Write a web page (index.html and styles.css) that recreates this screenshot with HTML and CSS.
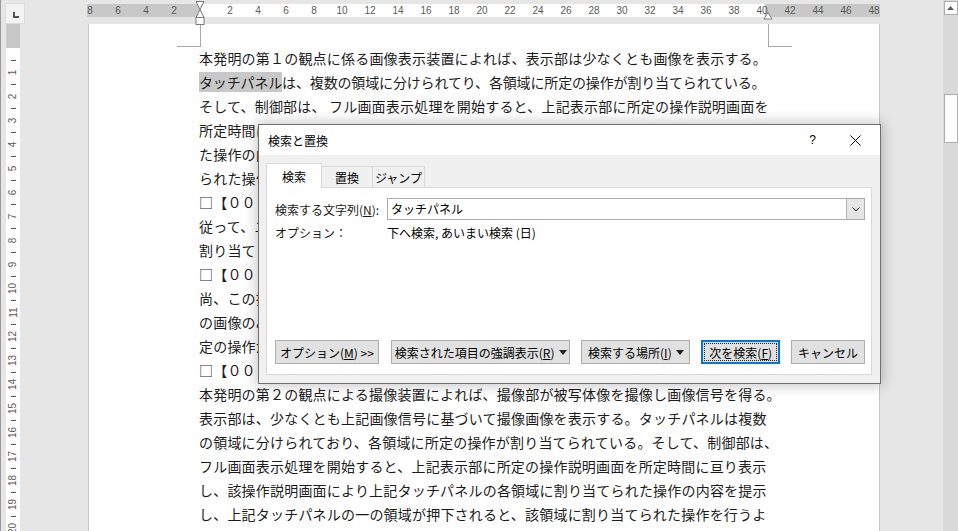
FILE: index.html
```html
<!DOCTYPE html>
<html lang="ja">
<head>
    <meta charset="UTF-8">
    <title>検索と置換</title>
    <link rel="stylesheet" href="styles.css">
</head>
<body>
<div class="app">
    <!-- Рабочая область документа -->
    <div class="workspace">
        <div class="top-bar">
            <div class="tab-selector"><span class="tab-l"></span></div>
            <div class="h-ruler">
                <div class="h-ruler-nums">
                    <span>8</span><span>6</span><span>4</span><span>2</span><span></span>
                    <span>2</span><span>4</span><span>6</span><span>8</span><span>10</span>
                    <span>12</span><span>14</span><span>16</span><span>18</span><span>20</span>
                    <span>22</span><span>24</span><span>26</span><span>28</span><span>30</span>
                    <span>32</span><span>34</span><span>36</span><span>38</span><span>40</span>
                    <span>42</span><span>44</span><span>46</span><span>48</span>
                </div>
                <svg class="indent-left" width="10" height="26" viewBox="0 0 10 26">
                    <polygon points="1,1.5 9,1.5 5,9.5" fill="#fff" stroke="#7a7a7a"/>
                    <polygon points="5,9.5 9,17.5 1,17.5" fill="#fff" stroke="#7a7a7a"/>
                    <rect x="1" y="17.5" width="8" height="7" fill="#fff" stroke="#7a7a7a"/>
                </svg>
                <svg class="indent-right" width="10" height="8" viewBox="0 0 10 8">
                    <polygon points="5,0.5 9,7 1,7" fill="#fff" stroke="#7a7a7a"/>
                </svg>
            </div>
        </div>

        <div class="main">
            <div class="v-ruler">
                <div class="v-ruler-top"><span class="tick"></span></div>
                <div class="v-ruler-body">
                    <span class="tick"></span><span class="num"><i>1</i></span>
                    <span class="tick"></span><span class="num"><i>2</i></span>
                    <span class="tick"></span><span class="num"><i>3</i></span>
                    <span class="tick"></span><span class="num"><i>4</i></span>
                    <span class="tick"></span><span class="num"><i>5</i></span>
                    <span class="tick"></span><span class="num"><i>6</i></span>
                    <span class="tick"></span><span class="num"><i>7</i></span>
                    <span class="tick"></span><span class="num"><i>8</i></span>
                    <span class="tick"></span><span class="num"><i>9</i></span>
                    <span class="tick"></span><span class="num"><i>10</i></span>
                    <span class="tick"></span><span class="num"><i>11</i></span>
                    <span class="tick"></span><span class="num"><i>12</i></span>
                    <span class="tick"></span><span class="num"><i>13</i></span>
                    <span class="tick"></span><span class="num"><i>14</i></span>
                    <span class="tick"></span><span class="num"><i>15</i></span>
                    <span class="tick"></span><span class="num"><i>16</i></span>
                    <span class="tick"></span><span class="num"><i>17</i></span>
                    <span class="tick"></span><span class="num"><i>18</i></span>
                    <span class="tick"></span><span class="num"><i>19</i></span>
                    <span class="tick"></span><span class="num"><i>20</i></span>
                </div>
            </div>

            <div class="page">
                <div class="margin-marks">
                    <span class="mark-left"></span>
                    <span class="mark-right"></span>
                </div>
                <div class="doc-text">
                    <div class="line">本発明の第１の観点に係る画像表示装置によれば、表示部は少なくとも画像を表示する。</div>
                    <div class="line tight"><span class="hl">タッチパネル</span>は、複数の領域に分けられてり、各領域に所定の操作が割り当てられている。</div>
                    <div class="line">そして、制御部は、 フル画面表示処理を開始すると、上記表示部に所定の操作説明画面を</div>
                    <div class="line">所定時間に亘り表示し、該操作説明画面により上記タッチパネルの各領域に割り当てられ</div>
                    <div class="line">た操作の内容を提示し、上記タッチパネルの一の領域が押下されると、該領域に割り当て</div>
                    <div class="line">られた操作を行うよう制御する。</div>
                    <div class="line">□【００１０】</div>
                    <div class="line">従って、ユーザは操作説明画面を見ることにより、タッチパネルの各領域に</div>
                    <div class="line">割り当てられた操作の内容を容易に把握することができる。</div>
                    <div class="line">□【００１１】</div>
                    <div class="line">尚、この操作説明画面は、所定時間が経過すると消去され、表示部には撮像画像等</div>
                    <div class="line">の画像のみが表示される。また、上記タッチパネルの一の領域が押下されると、所</div>
                    <div class="line">定の操作が実行される。</div>
                    <div class="line">□【００１２】</div>
                    <div class="line">本発明の第２の観点による撮像装置によれば、撮像部が被写体像を撮像し画像信号を得る。</div>
                    <div class="line">表示部は、少なくとも上記画像信号に基づいて撮像画像を表示する。タッチパネルは複数</div>
                    <div class="line">の領域に分けられており、各領域に所定の操作が割り当てられている。そして、制御部は、</div>
                    <div class="line">フル画面表示処理を開始すると、上記表示部に所定の操作説明画面を所定時間に亘り表示</div>
                    <div class="line">し、該操作説明画面により上記タッチパネルの各領域に割り当てられた操作の内容を提示</div>
                    <div class="line">し、上記タッチパネルの一の領域が押下されると、該領域に割り当てられた操作を行うよ</div>
                </div>
            </div>
        </div>
    </div>

    <!-- Полоса прокрутки -->
    <div class="scrollbar">
        <div class="scroll-up">
            <svg width="7" height="4" viewBox="0 0 7 4"><polygon points="3.5,0 7,4 0,4" fill="#606060"/></svg>
        </div>
        <div class="scroll-thumb"></div>
    </div>

    <!-- Диалог поиска -->
    <div class="dialog">
        <div class="dialog-title">
            <span class="title-text">検索と置換</span>
            <span class="title-help">?</span>
            <span class="title-close">
                <svg width="11" height="11" viewBox="0 0 11 11"><path d="M0.5 0.5 L10.5 10.5 M10.5 0.5 L0.5 10.5" stroke="#000" stroke-width="1"/></svg>
            </span>
        </div>
        <div class="dialog-body">
            <div class="tabs">
                <span class="tab active">検索</span>
                <span class="tab">置換</span>
                <span class="tab">ジャンプ</span>
            </div>
            <div class="panel">
                <div class="field-row">
                    <span class="field-label">検索する文字列(<u>N</u>):</span>
                    <div class="combo">
                        <span class="combo-text">タッチパネル</span>
                        <span class="combo-btn">
                            <svg width="8" height="5" viewBox="0 0 8 5"><polyline points="0.5,0.5 4,4 7.5,0.5" fill="none" stroke="#333"/></svg>
                        </span>
                    </div>
                </div>
                <div class="option-row">
                    <span class="field-label">オプション：</span>
                    <span>下へ検索, あいまい検索 (日)</span>
                </div>
                <div class="spacer"></div>
                <div class="button-row">
                    <button class="btn btn-options"><span>オプション(<u>M</u>) &gt;&gt;</span></button>
                    <button class="btn btn-highlight"><span>検索された項目の強調表示(<u>R</u>)</span>
                        <svg width="8" height="5" viewBox="0 0 8 5"><polygon points="0,0 8,0 4,5" fill="#222"/></svg>
                    </button>
                    <button class="btn btn-where"><span>検索する場所(<u>I</u>)</span>
                        <svg width="8" height="5" viewBox="0 0 8 5"><polygon points="0,0 8,0 4,5" fill="#222"/></svg>
                    </button>
                    <button class="btn btn-next"><span class="focus-ring"><span>次を検索(<u>F</u>)</span></span></button>
                    <button class="btn btn-cancel"><span>キャンセル</span></button>
                </div>
            </div>
        </div>
    </div>
</div>
</body>
</html>
```

FILE: styles.css
```css
body {
    margin: 0;
    background-color: #e6e6e6;
    overflow: hidden;
    font-family: "Noto Sans CJK JP", "Liberation Sans", sans-serif;
}

.app {
    position: relative;
    width: 958px;
    height: 531px;
    display: flex;
    box-sizing: border-box;
    border-left: 1px solid #9a9a9a;
}

.workspace {
    flex: 1;
    display: flex;
    flex-direction: column;
}

/* Верхняя линейка */
.top-bar {
    height: 26px;
    display: flex;
    align-items: flex-start;
}

.tab-selector {
    margin: 3px 0 0 4px;
    width: 20px;
    height: 21px;
    background-color: #f3f3f3;
    box-sizing: border-box;
    border: 1px solid #dcdcdc;
    display: flex;
    align-items: center;
    justify-content: center;
}

.tab-l {
    width: 4px;
    height: 4px;
    margin: 2px 0 0 1px;
    border-left: 2px solid #555;
    border-bottom: 2px solid #555;
}

.h-ruler {
    position: relative;
    margin: 4px 0 0 62px;
    width: 793px;
    height: 13px;
    background: linear-gradient(to right, #c8c8c8 0 113px, #fff 113px 678px, #c8c8c8 678px);
}

.h-ruler-nums {
    display: flex;
    margin-left: -11px;
    overflow: hidden;
    width: 804px;
}

.h-ruler-nums span {
    flex: 0 0 28px;
    text-align: center;
    font-family: "Liberation Sans", Arial, sans-serif;
    font-size: 10px;
    line-height: 13px;
    color: #5a5a5a;
}

.indent-left {
    position: absolute;
    left: 108px;
    top: -4px;
}

.indent-right {
    position: absolute;
    left: 676px;
    top: 8px;
}

/* Основная область */
.main {
    flex: 1;
    display: flex;
    align-items: stretch;
}

.v-ruler {
    margin-left: 5px;
    width: 14px;
    display: flex;
    flex-direction: column;
    overflow: hidden;
}

.v-ruler-top {
    height: 24px;
    background-color: #c8c8c8;
    display: flex;
    align-items: center;
    justify-content: center;
}

.v-ruler-body {
    flex: 1;
    background-color: #fff;
    padding-top: 6px;
    display: flex;
    flex-direction: column;
    align-items: center;
}

.v-ruler .tick {
    display: block;
    flex: 0 0 12px;
    width: 5px;
    background: linear-gradient(#555, #555) center / 5px 1px no-repeat;
}

.v-ruler .num {
    display: flex;
    flex: 0 0 12px;
    width: 14px;
    align-items: center;
    justify-content: center;
}

.v-ruler .num i {
    font-style: normal;
    font-family: "Liberation Sans", Arial, sans-serif;
    font-size: 10px;
    color: #5a5a5a;
    transform: rotate(-90deg);
    white-space: nowrap;
}

.page {
    margin-left: 68px;
    width: 792px;
    box-sizing: border-box;
    background-color: #fff;
    border-left: 1px solid #c6c6c6;
    border-right: 1px solid #c6c6c6;
}

.margin-marks {
    height: 22px;
    display: flex;
}

.mark-left {
    margin-left: 88px;
    width: 23px;
    height: 22px;
    border-right: 1px solid #a8a8a8;
    border-bottom: 1px solid #a8a8a8;
}

.mark-right {
    margin-left: 567px;
    width: 23px;
    height: 22px;
    border-left: 1px solid #a8a8a8;
    border-bottom: 1px solid #a8a8a8;
}

.doc-text {
    margin-left: 110px;
    width: 568px;
    color: #1c1c1c;
}

.line {
    height: 24px;
    line-height: 24px;
    font-size: 14px;
    letter-spacing: 0.2px;
    white-space: nowrap;
}

.line.tight {
    letter-spacing: -0.15px;
}

.hl {
    background-color: #c8c8c8;
}

/* Полоса прокрутки */
.scrollbar {
    width: 15px;
    background-color: #dadada;
    display: flex;
    flex-direction: column;
    align-items: center;
}

.scroll-up {
    margin-top: 1px;
    width: 14px;
    height: 14px;
    box-sizing: border-box;
    background-color: #fff;
    border: 1px solid #adadad;
    display: flex;
    align-items: center;
    justify-content: center;
}

.scroll-thumb {
    margin-top: 79px;
    width: 14px;
    height: 49px;
    box-sizing: border-box;
    background-color: #fff;
    border: 1px solid #adadad;
}

/* Диалог */
.dialog {
    position: absolute;
    left: 257px;
    top: 124px;
    width: 623px;
    height: 260px;
    box-sizing: border-box;
    border: 1px solid #6e6e6e;
    background-color: #f0f0f0;
    box-shadow: 0 0 12px 2px rgba(0, 0, 0, 0.22);
    display: flex;
    flex-direction: column;
    font-size: 12px;
    color: #000;
    white-space: nowrap;
}

.dialog-title {
    height: 30px;
    background-color: #fff;
    display: flex;
    align-items: center;
}

.title-text {
    margin-left: 9px;
    flex: 1;
}

.title-help {
    font-family: "Liberation Sans", Arial, sans-serif;
    font-size: 12px;
    margin-right: 34px;
}

.title-close {
    display: flex;
    margin-right: 19px;
}

.dialog-body {
    flex: 1;
    padding: 8px 8px 8px 7px;
    display: flex;
    flex-direction: column;
}

.tabs {
    display: flex;
    align-items: flex-end;
    height: 24px;
}

.tab {
    height: 22px;
    box-sizing: border-box;
    border: 1px solid #d9d9d9;
    border-bottom: none;
    border-left: none;
    display: flex;
    align-items: center;
    justify-content: center;
    margin-bottom: -1px;
}

.tab.active {
    width: 56px;
    height: 25px;
    background-color: #fff;
    border-left: 1px solid #d9d9d9;
    position: relative;
}

.tab:nth-child(2) {
    width: 51px;
}

.tab:nth-child(3) {
    width: 52px;
}

.panel {
    flex: 1;
    background-color: #fff;
    border: 1px solid #d9d9d9;
    padding: 10px 6px 10px 8px;
    display: flex;
    flex-direction: column;
}

.field-row {
    display: flex;
    align-items: center;
    height: 22px;
}

.field-label {
    width: 112px;
    color: #1a1a1a;
}

.combo {
    width: 478px;
    height: 22px;
    box-sizing: border-box;
    border: 1px solid #acacac;
    display: flex;
    align-items: stretch;
}

.combo-text {
    flex: 1;
    padding-left: 3px;
    line-height: 20px;
}

.combo-btn {
    width: 17px;
    background-color: #e5e5e5;
    border-left: 1px solid #b5b5b5;
    display: flex;
    align-items: center;
    justify-content: center;
}

.option-row {
    display: flex;
    align-items: center;
    height: 24px;
}

.spacer {
    flex: 1;
}

.button-row {
    display: flex;
    gap: 11px;
}

.btn {
    height: 24px;
    box-sizing: border-box;
    border: 1px solid #adadad;
    background-color: #e1e1e1;
    font-family: inherit;
    font-size: 12px;
    color: #000;
    padding: 0;
    display: flex;
    align-items: center;
    justify-content: center;
    gap: 4px;
    white-space: nowrap;
}

.btn-options {
    width: 104px;
}

.btn-highlight {
    margin-left: 1px;
    width: 180px;
}

.btn-where {
    width: 109px;
}

.btn-next {
    width: 79px;
    border: 2px solid #0078d7;
    padding: 1px;
    align-items: stretch;
}

.focus-ring {
    flex: 1;
    border: 1px dotted #222;
    display: flex;
    align-items: center;
    justify-content: center;
}

.btn-cancel {
    width: 74px;
}
```
